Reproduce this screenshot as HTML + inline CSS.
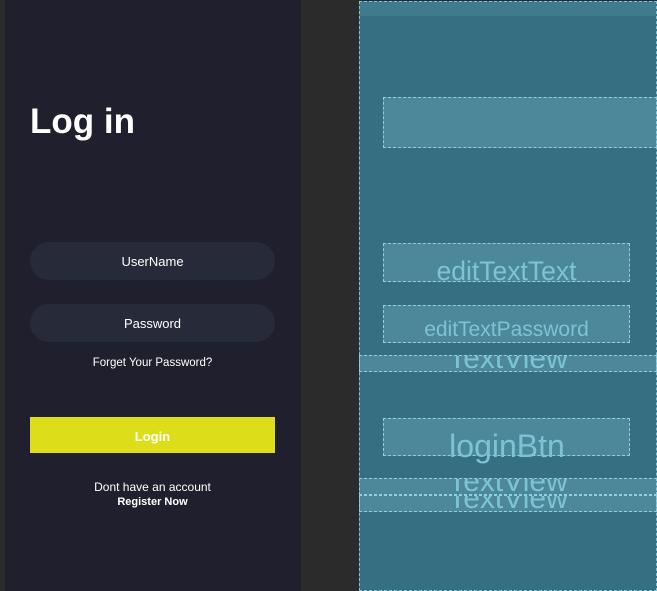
<!DOCTYPE html>
<html><head><style>
body{margin:0;width:657px;height:591px;background:#2b2b2b;position:relative;overflow:hidden;font-family:"Liberation Sans",Roboto,sans-serif}
.a{position:absolute}
#left{left:5px;top:0;width:296px;height:591px;background:#201f2d}
.inp{position:absolute;left:30px;width:245px;height:38px;border-radius:19px;background:#272a39;color:#fff;font-size:13px;text-align:center;line-height:40px}
.c{position:absolute;left:30px;width:245px;text-align:center;color:#fff;font-size:11px}
#bp{left:359px;top:1px;width:296px;height:588px;background:#366f81;border:1px dashed #7fc6d8}
.b{position:absolute;border:1px dashed #8fd0e0;background:rgba(120,180,200,.35);box-sizing:border-box;overflow:hidden;color:#7cc3d6;text-align:center;font-family:"Liberation Sans",sans-serif}
</style></head><body>
<div class="a" id="left"></div>
<div class="a" style="left:30px;top:102px;color:#fff;font-weight:bold;font-size:35px">Log in</div>
<div class="inp" style="top:242px">UserName</div>
<div class="inp" style="top:304px">Password</div>
<div class="c" style="top:357px;font-size:11.5px">Forget Your Password?</div>
<div class="a" style="left:30px;top:417px;width:245px;height:36px;background:#dedd1a;color:#fff;font-weight:bold;font-size:13px;text-align:center;line-height:39px">Login</div>
<div class="c" style="top:480px;font-size:12px">Dont have an account</div>
<div class="c" style="top:496px;font-weight:bold">Register Now</div>

<div class="a" id="bp"></div>
<div class="a" style="left:360px;top:2px;width:296px;height:14px;background:#3f7b8d"></div>
<div class="b" style="left:383px;top:97px;width:274px;height:51px"></div>
<div class="b" style="left:383px;top:243px;width:247px;height:39px;font-size:26.5px;line-height:54px">editTextText</div>
<div class="b" style="left:383px;top:305px;width:247px;height:38px;font-size:21px;line-height:48px">editTextPassword</div>
<div class="b" style="left:359px;top:355px;width:298px;height:17px;font-size:30px;line-height:6px">TextView</div>
<div class="b" style="left:383px;top:418px;width:247px;height:38px"></div>
<div class="a" style="left:359px;top:428px;width:296px;text-align:center;color:#7cc3d6;font-size:32px">loginBtn</div>
<div class="b" style="left:359px;top:478px;width:298px;height:17px;font-size:30px;line-height:6px">TextView</div>
<div class="b" style="left:359px;top:495px;width:298px;height:17px;font-size:30px;line-height:6px">TextView</div>
</body></html>
